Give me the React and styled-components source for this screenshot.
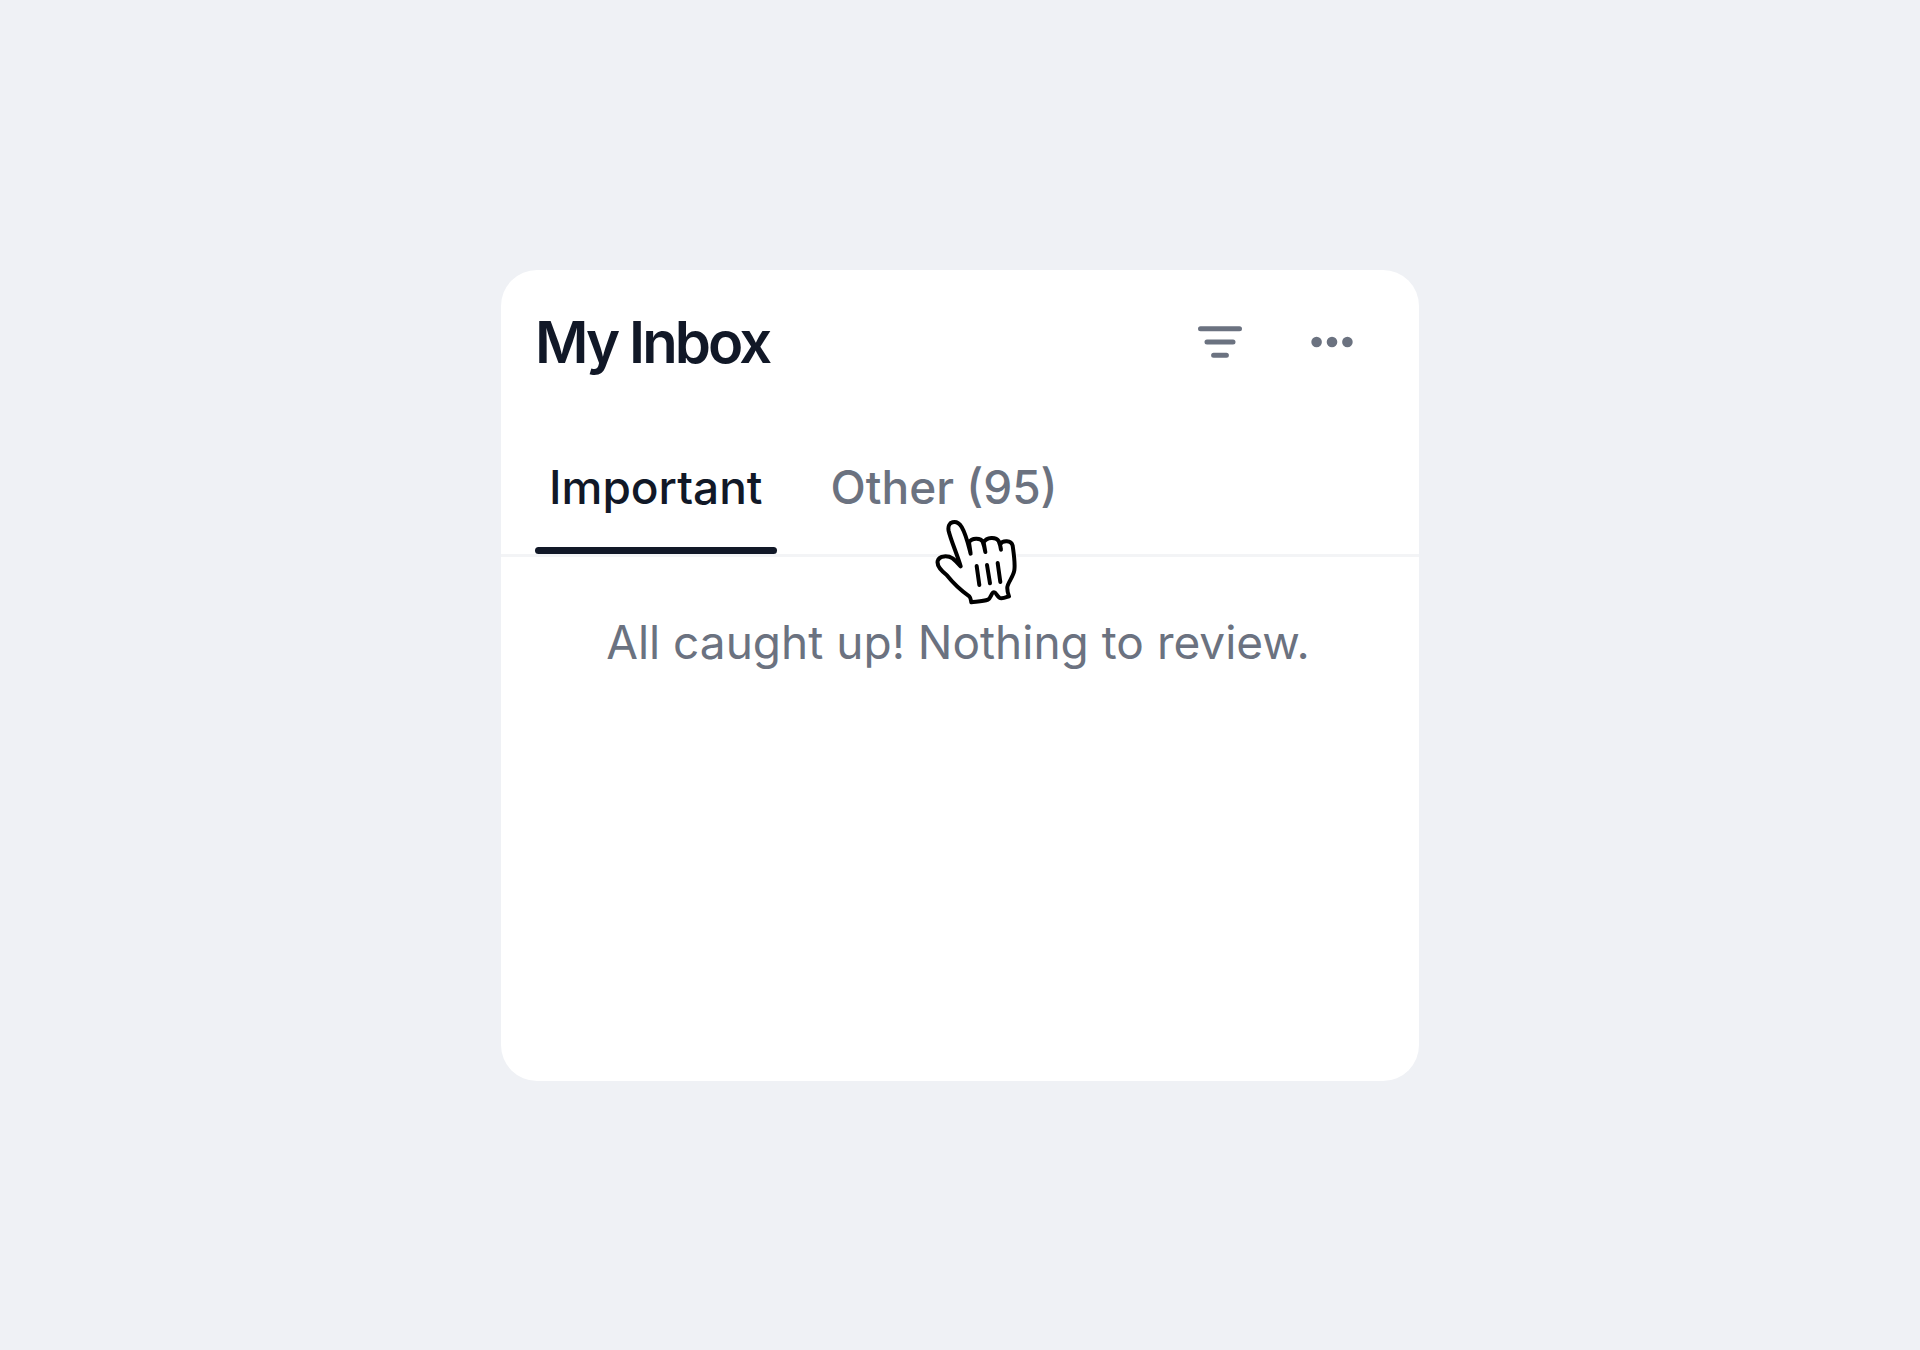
import { useState } from "react";
import styled, { createGlobalStyle } from "styled-components";

const GlobalStyle = createGlobalStyle`
* {
  box-sizing: border-box;
}

body {
  margin: 0;
  background: #eff1f5;
  font-family: Inter, "Liberation Sans", sans-serif;
}
`;

const Page = styled.main`
min-height: 100vh;
display: flex;
align-items: center;
justify-content: center;
`;

const Card = styled.section`
width: 100%;
max-width: 918px;
min-height: 811px;
background: #ffffff;
border-radius: 36px;
`;

const Header = styled.header`
display: flex;
align-items: center;
justify-content: space-between;
padding: 34px 31px 0 34px;
`;

const Title = styled.h1`
margin: 0;
font-size: 58px;
line-height: 76px;
font-weight: 600;
letter-spacing: -0.05em;
color: #111827;
`;

const Actions = styled.div`
display: flex;
`;

const IconButton = styled.button`
width: 112px;
height: 72px;
padding: 0;
border: 0;
background: none;
color: #6b7280;
display: flex;
align-items: center;
justify-content: center;
cursor: pointer;
`;

const TabList = styled.div`
display: flex;
gap: 40px;
margin-top: 77px;
padding: 0 34px;
border-bottom: 3px solid #f3f4f6;
`;

const TabItem = styled.div`
position: relative;
`;

const Tab = styled.button`
padding: 0 14px 30px;
border: 0;
border-bottom: 7px solid transparent;
background: none;
font-family: inherit;
font-size: 46px;
line-height: 60px;
font-weight: 500;
color: ${({ $active }) => ($active ? "#111827" : "#6b7280")};
cursor: pointer;
`;

const Indicator = styled.span`
position: absolute;
left: 0;
right: 0;
bottom: 0;
height: 7px;
border-radius: 4px;
background: #111827;
`;

const Hand = styled.svg`
position: absolute;
left: 117px;
top: 62px;
pointer-events: none;
`;

const Message = styled.p`
margin: 53px 38px 53px 34px;
font-size: 46px;
line-height: 64px;
text-align: center;
color: #6b7280;
`;

function FilterIcon() {
  return (
    <svg width="44" height="32" viewBox="0 0 44 32" stroke="currentColor" strokeWidth="5" strokeLinecap="round" aria-hidden="true">
      <path d="M2.5 2.7h39M9 16h26M15.6 29.3h12.8" />
    </svg>
  );
}

function MoreIcon() {
  return (
    <svg width="42" height="12" viewBox="0 0 42 12" fill="currentColor" aria-hidden="true">
      <circle cx="5.6" cy="6" r="5.3" />
      <circle cx="21" cy="6" r="5.3" />
      <circle cx="36.4" cy="6" r="5.3" />
    </svg>
  );
}

function HandCursor() {
  return (
    <Hand width="84" height="86" viewBox="42 42 252 258" fill="none" stroke="#000000" strokeWidth="12" strokeLinecap="round" strokeLinejoin="round" aria-hidden="true">
      <path
        fill="#ffffff"
        d="M122 184C112 150 92 104 86 78C80 48 110 42 125 66C138 88 144 115 152 146L147 112C155 98 182 98 188 110C192 120 194 130 196 141L191 112C200 95 228 95 236 108C240 118 242 125 243 134L240 118C248 105 274 105 278 122C282 150 286 175 283 196C280 215 264 232 262 246C261 258 264 266 267 274C255 278 245 283 238 278C230 272 228 262 222 262C214 262 213 280 204 284C190 290 165 290 154 292C152 280 152 278 148 274C125 258 100 235 80 210C65 198 50 185 53 168C58 150 85 152 98 160C108 168 115 176 122 184Z"
      />
      <path d="M170 183L178 240M201 180L210 235M233 174L241 231" />
    </Hand>
  );
}

const tabs = [
  { id: "important", label: "Important" },
  { id: "other", label: "Other (95)" },
];

function App() {
  const [active, setActive] = useState("important");

  return (
    <>
      <GlobalStyle />
      <Page>
        <Card>
          <Header>
            <Title>My Inbox</Title>
            <Actions>
              <IconButton type="button" aria-label="Filter">
                <FilterIcon />
              </IconButton>
              <IconButton type="button" aria-label="More">
                <MoreIcon />
              </IconButton>
            </Actions>
          </Header>
          <TabList>
            {tabs.map((tab) => (
              <TabItem key={tab.id}>
                <Tab
                  type="button"
                  aria-pressed={active === tab.id}
                  $active={active === tab.id}
                  onClick={() => setActive(tab.id)}
                >
                  {tab.label}
                </Tab>
                {active === tab.id && <Indicator />}
                {tab.id === "other" && <HandCursor />}
              </TabItem>
            ))}
          </TabList>
          <Message>All caught up! Nothing to review.</Message>
        </Card>
      </Page>
    </>
  );
}

export default App;
